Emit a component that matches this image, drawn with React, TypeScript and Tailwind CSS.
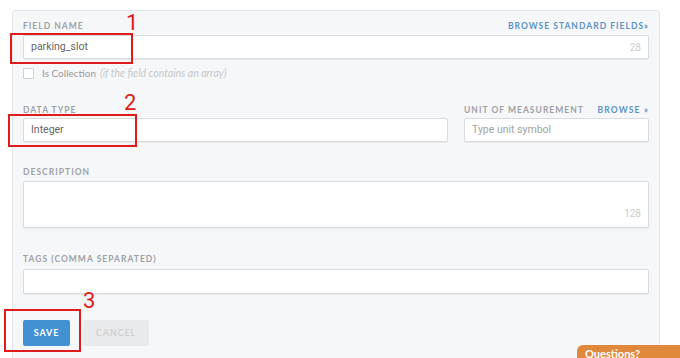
import React from "react";

const label = "text-[8.5px] font-bold uppercase tracking-[0.12em] text-[#9da1a6] leading-[12px]";
const box =
  "h-[24px] bg-white border border-[#d8dbdf] rounded-[2px] shadow-[0_1px_1px_rgba(0,0,0,0.06)] flex items-center px-[7px] text-[10.5px]";

const Mark: React.FC<{ n: string; className: string }> = ({ n, className }) => (
  <span
    className={`absolute text-[22px] leading-none text-[#e01b1b] ${className}`}
    style={{ fontFamily: "Roboto, sans-serif" }}
  >
    {n}
  </span>
);

const App: React.FC = () => {
  return (
    <div
      className="relative w-[680px] h-[358px] overflow-hidden bg-white pt-[10px] pl-[12px]"
      style={{ fontFamily: "Lato, 'Open Sans', sans-serif" }}
    >
      <div className="w-[648px] h-[400px] bg-[#f6f7f9] border border-[#e3e6ea] rounded-t-[3px] px-[10px] pt-[9px]">
        {/* Field name */}
        <div className="flex justify-between items-center h-[12px]">
          <span className={label}>Field Name</span>
          <span className="text-[8.5px] font-bold uppercase tracking-[0.12em] text-[#5b93c6]">
            Browse Standard Fields»
          </span>
        </div>
        <div className={`${box} text-[#666] mt-[3px] justify-between`} style={{ fontFamily: "Roboto, sans-serif" }}>
          <span>parking_slot</span>
          <span className="text-[10px] text-[#ccc]">28</span>
        </div>
        <div className="flex items-center mt-[9px] h-[11px]">
          <span className="w-[11px] h-[11px] border border-[#cfd2d6] bg-white rounded-[1px]" />
          <span className="ml-[8px] text-[10px] text-[#999]">Is Collection</span>
          <span className="ml-[4px] text-[10.5px] italic text-[#c6c8cb]">(if the field contains an array)</span>
        </div>

        {/* Data type / unit */}
        <div className="flex gap-[16px] mt-[25px]">
          <div className="w-[425px]">
            <div className={`${label} h-[12px]`}>Data Type</div>
            <div className={`${box} text-[#666] mt-[2px]`} style={{ fontFamily: "Roboto, sans-serif" }}>
              Integer
            </div>
          </div>
          <div className="flex-1">
            <div className="flex justify-between h-[12px]">
              <span className={label}>Unit of Measurement</span>
              <span className="text-[8.5px] font-bold uppercase tracking-[0.14em] text-[#5b93c6] leading-[12px]">
                Browse »
              </span>
            </div>
            <div className={`${box} text-[#a3a3a3] mt-[2px]`} style={{ fontFamily: "Roboto, sans-serif" }}>
              Type unit symbol
            </div>
          </div>
        </div>

        {/* Description */}
        <div className={`${label} mt-[24px] h-[12px]`}>Description</div>
        <div className="mt-[3px] h-[47px] bg-white border border-[#d8dbdf] rounded-[2px] shadow-[0_1px_1px_rgba(0,0,0,0.06)] flex items-end justify-end px-[7px] pb-[6px]">
          <span className="text-[10px] text-[#ccc]" style={{ fontFamily: "Roboto, sans-serif" }}>
            128
          </span>
        </div>

        {/* Tags */}
        <div className={`${label} mt-[25px] h-[12px]`}>Tags (Comma Separated)</div>
        <div className={`${box} mt-[4px] h-[25px]`} />

        {/* Buttons */}
        <div className="flex gap-[13px] mt-[26px]">
          <button className="w-[47px] h-[26px] bg-[#4291d3] rounded-[2px] text-white text-[9px] font-bold tracking-[0.1em]">
            SAVE
          </button>
          <button className="w-[66px] h-[26px] bg-[#e9eaeb] rounded-[2px] text-[#cfd1d3] text-[9px] font-bold tracking-[0.1em]">
            CANCEL
          </button>
        </div>
      </div>

      {/* Red annotations */}
      <div className="absolute left-[10px] top-[33px] w-[123px] h-[31px] border-2 border-[#e01b1b]" />
      <Mark n="1" className="left-[126px] top-[12px]" />
      <div className="absolute left-[8px] top-[114px] w-[129px] h-[33px] border-2 border-[#e01b1b]" />
      <Mark n="2" className="left-[124px] top-[92px]" />
      <div className="absolute left-[4px] top-[309px] w-[77px] h-[43px] border-2 border-[#e01b1b]" />
      <Mark n="3" className="left-[83px] top-[290px]" />

      {/* Questions tab */}
      <div className="absolute left-[577px] top-[345px] w-[110px] h-[24px] bg-[#e0893c] rounded-tl-[6px] px-[8px] pt-[3px] text-[11px] font-bold text-white leading-none">
        Questions?
      </div>
    </div>
  );
};

export default App;
